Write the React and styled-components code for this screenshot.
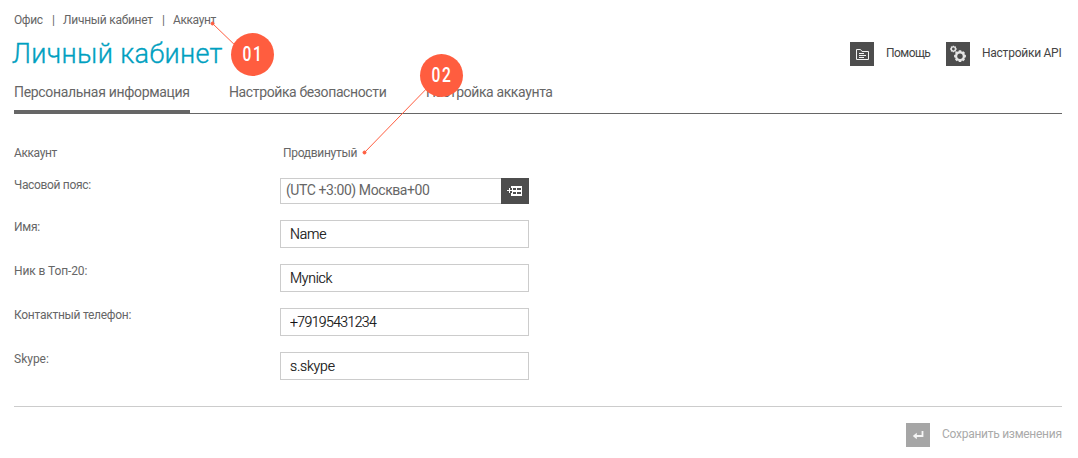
import React from "react";
import styled, { createGlobalStyle } from "styled-components";

const GlobalStyle = createGlobalStyle`
  * { box-sizing: border-box; }
  body { margin: 0; background: #fff; color: #666; font: 12px/16px Roboto, "Liberation Sans", sans-serif; }
  button, input { font: inherit; color: inherit; border-radius: 0; }
`;

const Page = styled.main`
  position: relative;
  width: 1078px;
  height: 458px;
  padding: 12px 16px 0 14px;
  overflow: hidden;
`;

const Label = styled.span`
  font-size: ${(p) => p.$size || 12}px;
  letter-spacing: ${(p) => p.$track || 0}px;
  white-space: nowrap;
`;

const FieldLabel = styled(Label)`
  line-height: 14px;
`;

const Breadcrumbs = styled.nav`
  display: flex;
  height: 16px;
`;

const Crumb = styled.div`
  width: ${(p) => p.$width}px;
  flex: none;
`;

const Heading = styled.header`
  display: flex;
  justify-content: space-between;
  height: 56px;
`;

const Title = styled.h1`
  margin: 9px 0 0 -2px;
  font-size: 27px;
  line-height: 34px;
  font-weight: 300;
  -webkit-text-stroke: 0.35px #00a0c0;
  letter-spacing: ${(p) => p.$track}px;
  color: #00a0c0;
`;

const Actions = styled.div`
  display: flex;
  padding-top: 14px;
`;

const Action = styled.a`
  display: flex;
  height: 24px;
  width: ${(p) => p.$width}px;
  color: ${(p) => (p.$disabled ? "#aaa" : "#444")};
  line-height: 22px;
`;

const IconBox = styled.span`
  display: block;
  flex: none;
  width: 24px;
  height: 24px;
  margin-right: 12px;
  background: ${(p) => (p.$disabled ? "#a6a6a6" : "#4d4d4d")};
  svg { display: block; }
`;

const Tabs = styled.nav`
  display: flex;
  height: 30px;
  border-bottom: 1px solid #666;
`;

const Tab = styled.a`
  flex: none;
  height: 30px;
  width: ${(p) => p.$width}px;
  margin-right: 39px;
  line-height: 17px;
  border-bottom: 4px solid ${(p) => (p.$active ? "#666" : "transparent")};
`;

const Form = styled.form`
  display: flex;
  flex-direction: column;
  height: 293px;
  padding-top: 31px;
  border-bottom: 1px solid #ccc;
`;

const Row = styled.div`
  display: grid;
  grid-template-columns: 266px 249px;
  height: ${(p) => p.$height || 44}px;
  align-items: start;
`;

const Value = styled.div`
  padding-left: 3px;
`;

const Input = styled.input`
  width: 249px;
  height: 28px;
  border: 1px solid #ccc;
  padding: 0 9px;
  color: #111;
  font-size: 14px;
  font-weight: 300;
  -webkit-text-stroke: 0.2px #111;
  letter-spacing: ${(p) => p.$track || 0}px;
  outline: none;
`;

const Picker = styled.div`
  display: flex;
  height: 26px;
  border: 1px solid #ccc;
  border-right: 0;
  padding-left: 5px;
  justify-content: space-between;
  line-height: 23px;
`;

const PickerButton = styled.button`
  width: 28px;
  height: 26px;
  margin-top: -1px;
  padding: 0;
  border: 0;
  background: #4d4d4d;
  svg { display: block; }
`;

const Footer = styled.footer`
  display: flex;
  justify-content: flex-end;
  padding-top: 16px;
`;

const CalloutLayer = styled.svg`
  position: absolute;
  left: 0;
  top: 0;
  pointer-events: none;
`;

const Badge = styled.div`
  position: absolute;
  left: ${(p) => p.$x}px;
  top: ${(p) => p.$y}px;
  width: 43px;
  height: 43px;
  border-radius: 50%;
  background: #ff5d3f;
  color: #fff;
  font-size: 19.5px;
  font-weight: 500;
  line-height: 43px;
  text-align: center;
  span { display: inline-block; transform: scaleX(0.8); letter-spacing: 1.8px; margin-right: -2px; }
`;

const FolderIcon = () => (
  <svg width="24" height="24" fill="none" stroke="#f2f2f2">
    <path d="M6.5 7.5h4l1.5 2h6.5v8h-12zM9 11.5h5M9 13.5h7M9 15.5h5" />
  </svg>
);

const gear = (cx, cy, outer, inner, teeth) => {
  const points = [];
  for (let i = 0; i < teeth; i += 1) {
    [[-0.42, inner], [-0.24, outer], [0.24, outer], [0.42, inner]].forEach(([offset, r]) => {
      const a = ((i + offset) * Math.PI * 2) / teeth;
      points.push(`${(cx + Math.sin(a) * r).toFixed(2)},${(cy - Math.cos(a) * r).toFixed(2)}`);
    });
  }
  return points.join(" ");
};

const GearsIcon = () => (
  <svg width="24" height="24" fill="#e6e6e6">
    <polygon points={gear(7.4, 7, 3.4, 2.7, 8)} />
    <circle cx="7.4" cy="7" r="1.4" fill="#4d4d4d" />
    <polygon points={gear(14, 14.2, 6, 4.9, 8)} />
    <circle cx="14" cy="14.2" r="2.7" fill="#4d4d4d" />
  </svg>
);

const ListIcon = () => (
  <svg width="28" height="26" shapeRendering="crispEdges">
    <path d="M6 12h5v1H6zM8 10h1v5H8z" fill="#fff" />
    <path d="M10 8h11v10H10v-3h1v-5h-1z" fill="#fff" />
    <path d="M12 10h3v2h-3zM16 10h4v2h-4zM12 14h3v2h-3zM16 14h4v2h-4z" fill="#4d4d4d" />
  </svg>
);

const EnterIcon = () => (
  <svg width="24" height="24">
    <path d="M16.5 8v5H9" fill="none" stroke="#f5f5f5" strokeWidth="1.8" />
    <path d="M6.8 13l4-3.2v6.4z" fill="#f5f5f5" />
  </svg>
);

const fields = [
  { label: "Имя:", track: -0.25, value: "Name", valueTrack: -0.2 },
  { label: "Ник в Топ-20:", track: -0.1, value: "Mynick", valueTrack: -0.25 },
  { label: "Контактный телефон:", track: -0.27, value: "+79195431234", valueTrack: -0.6 },
  { label: "Skype:", track: 0, value: "s.skype", valueTrack: -0.2 },
];

export default function App() {
  return (
    <Page>
      <GlobalStyle />
      <Breadcrumbs>
        <Crumb $width={38}><Label $track={-0.4}>Офис</Label></Crumb>
        <Crumb $width={11}>|</Crumb>
        <Crumb $width={99}><Label $track={-0.27}>Личный кабинет</Label></Crumb>
        <Crumb $width={11}>|</Crumb>
        <Crumb $width={60}><Label $track={-0.4}>Аккаунт</Label></Crumb>
      </Breadcrumbs>
      <Heading>
        <Title $track={0.35}>Личный кабинет</Title>
        <Actions>
          <Action $width={96}><IconBox><FolderIcon /></IconBox><Label $track={-0.55}>Помощь</Label></Action>
          <Action $width={116}><IconBox><GearsIcon /></IconBox><Label $track={-0.25}>Настройки API</Label></Action>
        </Actions>
      </Heading>
      <Tabs>
        <Tab $active $width={176}><Label $size={14} $track={-0.32}>Персональная информация</Label></Tab>
        <Tab $width={158}><Label $size={14} $track={-0.38}>Настройка безопасности</Label></Tab>
        <Tab $width={140}><Label $size={14} $track={-0.38}>Настройка аккаунта</Label></Tab>
      </Tabs>
      <Form>
        <Row $height={33}>
          <Label $track={-0.4}>Аккаунт</Label>
          <Value><Label $track={-0.3}>Продвинутый</Label></Value>
        </Row>
        <Row $height={42}>
          <FieldLabel $track={-0.33}>Часовой пояс:</FieldLabel>
          <Picker>
            <Label $size={14} $track={-0.42}>(UTC +3:00) Москва+00</Label>
            <PickerButton type="button"><ListIcon /></PickerButton>
          </Picker>
        </Row>
        {fields.map((field) => (
          <Row key={field.label}>
            <FieldLabel $track={field.track}>{field.label}</FieldLabel>
            <Input defaultValue={field.value} $track={field.valueTrack} />
          </Row>
        ))}
      </Form>
      <Footer>
        <Action $disabled $width={156}><IconBox $disabled><EnterIcon /></IconBox><Label $track={-0.27}>Сохранить изменения</Label></Action>
      </Footer>
      <CalloutLayer width="1078" height="458" stroke="#ff5d3f" fill="#ff5d3f">
        <path d="M212.5 23.5L240 50M364.5 152.5L435 80" />
        <circle cx="212.5" cy="23.5" r="1.5" />
        <circle cx="364.5" cy="152.5" r="1.5" />
      </CalloutLayer>
      <Badge $x={230.5} $y={32.5}><span>01</span></Badge>
      <Badge $x={419.5} $y={53.5}><span>02</span></Badge>
    </Page>
  );
}
